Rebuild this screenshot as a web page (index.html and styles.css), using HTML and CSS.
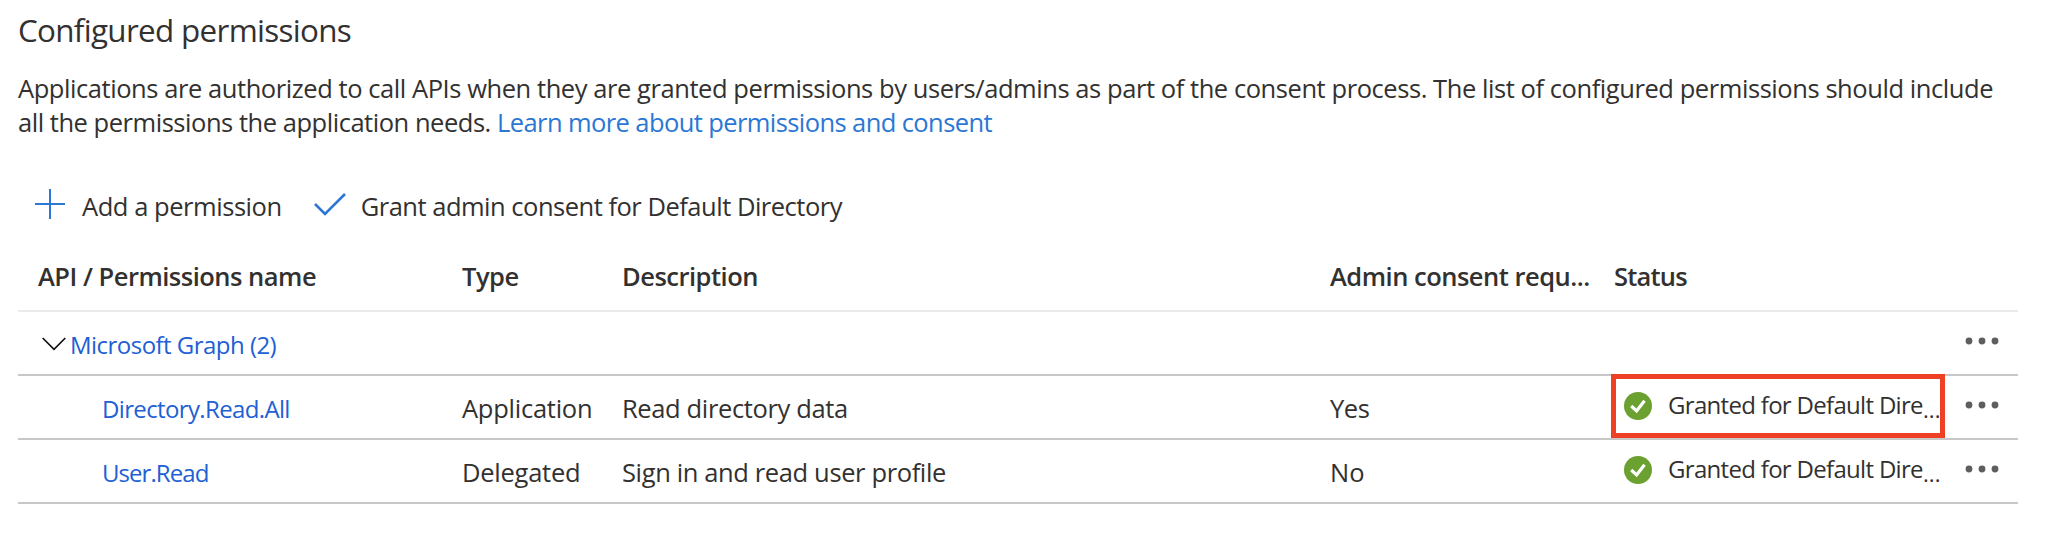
FILE: index.html
```html
<!DOCTYPE html>
<html lang="en">
<head>
<meta charset="utf-8">
<title>Configured permissions</title>
<link rel="stylesheet" href="styles.css">
</head>
<body>
<svg class="defs" width="0" height="0" aria-hidden="true">
  <symbol id="more" viewBox="0 0 40 10"><circle cx="4" cy="5" r="3.4"/><circle cx="17" cy="5" r="3.4"/><circle cx="30" cy="5" r="3.4"/></symbol>
  <symbol id="ok" viewBox="0 0 28 28"><circle cx="14" cy="14" r="14" fill="#6ba130"/><path d="M7.2 14 12.6 18.9 20.5 8.7" fill="none" stroke="#fff" stroke-width="3.2"/></symbol>
</svg>
<main class="page">
  <h1 class="title">Configured permissions</h1>
  <p class="intro"><span class="intro-first">Applications are authorized to call APIs when they are granted permissions by users/admins as part of the consent process. The list of configured permissions should include</span><br><span class="intro-second">all the permissions the application needs. </span><a class="learn">Learn more about permissions and consent</a></p>

  <div class="toolbar">
    <button class="command"><svg class="plus" width="30" height="30" viewBox="0 0 30 30"><path d="M15 0V30M0 15H30"/></svg><span>Add a permission</span></button>
    <button class="command"><svg class="check" width="32" height="24" viewBox="0 0 32 24"><path d="M1 12 11 22 31 2"/></svg><span class="grant">Grant admin consent for Default Directory</span></button>
  </div>

  <section class="table">
    <div class="row head">
      <span class="api">API / Permissions name</span><span>Type</span><span>Description</span><span>Admin consent requ...</span><span class="status-head">Status</span>
    </div>
    <div class="row">
      <span class="group"><svg class="chevron" width="24" height="14" viewBox="0 0 24 14"><path d="M.7 1 12 12.3 23.3 1"/></svg><a class="link graph">Microsoft Graph (2)</a></span>
      <svg class="more" width="40" height="10"><use href="#more"/></svg>
    </div>
    <div class="row">
      <a class="link scope directory">Directory.Read.All</a><span class="kind">Application</span><span class="desc">Read directory data</span><span class="required">Yes</span>
      <span class="status marked"><svg width="28" height="28"><use href="#ok"/></svg><span class="granted">Granted for Default Dire</span><span class="cut">...</span></span>
      <svg class="more" width="40" height="10"><use href="#more"/></svg>
    </div>
    <div class="row">
      <a class="link scope user">User.Read</a><span class="kind">Delegated</span><span class="desc">Sign in and read user profile</span><span class="required no">No</span>
      <span class="status"><svg width="28" height="28"><use href="#ok"/></svg><span class="granted">Granted for Default Dire</span><span class="cut">...</span></span>
      <svg class="more" width="40" height="10"><use href="#more"/></svg>
    </div>
  </section>
</main>
</body>
</html>
```

FILE: styles.css
```css
* { box-sizing: border-box; }
body {
  margin: 0;
  background: #fff;
  color: #323130;
  font: 400 25.5px/34px "Open Sans", "Noto Sans", sans-serif;
}
.defs { display: block; }
.page { padding: 8px 50px 0 18px; }
.title { margin: 0 0 19px; font-size: 31.4px; line-height: 44px; font-weight: 400; letter-spacing: -.68px; }
.intro { margin: 0; white-space: pre; }
.intro-first { letter-spacing: -.433px; }
.intro-second { letter-spacing: -.465px; }
.learn { color: #2b77d4; letter-spacing: -.59px; }

.toolbar { display: flex; height: 50px; margin-top: 42px; padding-left: 17px; gap: 32px; }
.command {
  display: flex;
  align-items: center;
  padding: 0;
  border: 0;
  background: none;
  color: inherit;
  font: inherit;
  letter-spacing: -.45px;
}
.command svg { fill: none; stroke: #2b77d4; }
.plus { margin: -4px 17px 0 0; stroke-width: 2; }
.check { margin: -4px 15px 0 0; stroke-width: 2.6; }
.grant { letter-spacing: -.49px; }

.row {
  display: grid;
  grid-template-columns: 444px 160px 708px 284px 350px 54px;
  height: 64px;
  padding-top: 15px;
  border-bottom: 2px solid #c8c8c8;
  white-space: nowrap;
}
.head {
  height: 81px;
  padding-top: 28px;
  border-bottom-color: #ebebeb;
  font-weight: 600;
  letter-spacing: -.5px;
}
.api { padding-left: 20px; }
.status-head { letter-spacing: -.8px; }
.group { display: flex; grid-column: 1 / 6; padding-left: 24px; }
.chevron { margin: 10px 4px 0 0; fill: none; stroke: #111; stroke-width: 1.7; }
.link { padding-top: 1px; color: #2160d4; font-size: 24px; }
.graph { letter-spacing: -.53px; }
.scope { padding-left: 84px; }
.directory { letter-spacing: -.64px; }
.user { letter-spacing: -.93px; }
.kind { letter-spacing: -.25px; }
.desc { letter-spacing: -.37px; }
.required { letter-spacing: -.4px; }
.no { letter-spacing: 0; }

.status {
  display: flex;
  width: 334px;
  height: 64px;
  margin: -17px 0 0 -3px;
  padding: 14px 0 0 13px;
  font-size: 24px;
}
.status svg { flex: none; margin: 4px 16px 0 0; }
.marked { padding: 9px 0 0 8px; border: 5px solid #ee4025; }
.granted { letter-spacing: -.69px; }
.cut { margin: 4px 0 0; font-size: 22px; letter-spacing: .1px; }
.more { margin: 9px 0 0 1px; fill: #605e5c; }
```
